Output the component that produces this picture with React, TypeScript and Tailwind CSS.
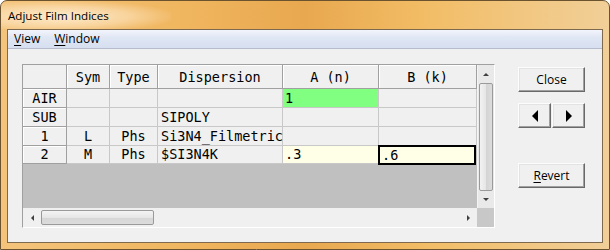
const mono = { fontFamily: '"DejaVu Sans Mono", "Liberation Mono", monospace' };

const cols = [
  { key: "sym", w: "w-[43px]", align: "justify-center" },
  { key: "type", w: "w-[48px]", align: "justify-center" },
  { key: "disp", w: "w-[125px]", align: "justify-start pl-[3px]" },
  { key: "a", w: "w-[96px]", align: "justify-start pl-[2px]" },
  { key: "b", w: "w-[98px]", align: "justify-start pl-[2px]" },
];

const headers = ["Sym", "Type", "Dispersion", "A (n)", "B (k)"];

const rows = [
  { label: "AIR", h: "h-[19px]", cells: ["", "", "", "1", ""] },
  { label: "SUB", h: "h-[19px]", cells: ["", "", "SIPOLY", "", ""] },
  { label: "1", h: "h-[19px]", cells: ["L", "Phs", "Si3N4_Filmetric", "", ""] },
  { label: "2", h: "h-[18px]", cells: ["M", "Phs", "$SI3N4K", ".3", ".6"] },
];

function cellBg(r: number, c: number) {
  if (r === 0 && c === 3) return "bg-[#80ff80]";
  if (r === 3 && (c === 3 || c === 4)) return "bg-[#ffffe8]";
  return "bg-[#f0f0f0]";
}

function Button({ children, className = "" }: { children: React.ReactNode; className?: string }) {
  return (
    <div
      className={`h-[25px] flex items-center justify-center border border-t-[#fcfcfc] border-l-[#fcfcfc] border-r-[#696969] border-b-[#696969] bg-[#f0f0f0] shadow-[inset_-1px_-1px_0_#a0a0a0,inset_1px_1px_0_#e3e3e3] text-[12px] text-black ${className}`}
    >
      {children}
    </div>
  );
}

function Tri({ dir, size = 4, color = "#404040" }: { dir: "up" | "down" | "left" | "right"; size?: number; color?: string }) {
  const s = size;
  const pts =
    dir === "up"
      ? `0,${s} ${s},0 ${2 * s},${s}`
      : dir === "down"
      ? `0,0 ${2 * s},0 ${s},${s}`
      : dir === "left"
      ? `${s},0 ${s},${2 * s} 0,${s}`
      : `0,0 0,${2 * s} ${s},${s}`;
  const w = dir === "up" || dir === "down" ? 2 * s : s;
  const h = dir === "up" || dir === "down" ? s : 2 * s;
  return (
    <svg width={w} height={h} viewBox={`0 0 ${w} ${h}`}>
      <polygon points={pts} fill={color} />
    </svg>
  );
}

export default function App() {
  return (
    <div
      className="w-[610px] h-[250px] flex flex-col border border-[#6b5330] rounded-t-[7px] bg-[linear-gradient(90deg,#f4c47c_0%,#f0b65f_30%,#e8a84f_50%,#f2bd66_70%,#f1cf98_100%)] px-[6px] pb-[6px]"
      style={{ fontFamily: '"Open Sans", "Noto Sans", sans-serif' }}
    >
      <div className="h-[28px] flex items-center pl-[1px] text-[11.6px] text-black relative">
        <div className="absolute left-[-6px] top-0 w-[170px] h-[28px] bg-[radial-gradient(ellipse_at_35%_55%,rgba(255,240,215,0.9)_0%,rgba(255,235,205,0.5)_45%,rgba(255,230,200,0)_75%)]" />
        <span className="relative pt-[1px]">Adjust Film Indices</span>
      </div>
      <div className="flex-1 flex flex-col border border-[#7d6a4e] bg-[#f0f0f0]">
        <div className="h-[19px] flex items-center border-b border-[#b6bccc] bg-[linear-gradient(180deg,#f3f5fb_0%,#e0e7f4_40%,#d6dff0_100%)] text-[12px] text-black">
          <span className="ml-[6px]"><span className="underline underline-offset-2">V</span>iew</span>
          <span className="ml-[14px]"><span className="underline underline-offset-2">W</span>indow</span>
        </div>
        <div className="flex pl-[14px] pt-[15px]">
          <div className="w-[473px] h-[164px] flex flex-col border border-t-[#a0a0a0] border-l-[#a0a0a0] border-r-white border-b-white" style={mono}>
            <div className="flex h-[143px]">
              <div className="w-[454px] flex flex-col bg-[#c0c0c0] text-[13.5px] text-black">
                <div className="flex h-[24px]">
                  <div className="w-[44px] h-full bg-[#f0f0f0] border-r border-b border-[#a0a0a0]" />
                  {headers.map((h, i) => (
                    <div
                      key={h}
                      className={`${cols[i].w} h-full flex items-center justify-center pt-[1px] bg-[#f0f0f0] border-r border-b border-[#a0a0a0] shadow-[inset_1px_1px_0_#ffffff]`}
                    >
                      {h}
                    </div>
                  ))}
                </div>
                {rows.map((row, r) => (
                  <div key={row.label} className={`flex ${row.h}`}>
                    <div className="w-[44px] h-full flex items-center justify-center bg-[#f0f0f0] border-r border-b border-[#a0a0a0] shadow-[inset_1px_1px_0_#ffffff]">
                      {row.label}
                    </div>
                    {row.cells.map((c, i) =>
                      r === 3 && i === 4 ? (
                        <div key={i} className={`${cols[i].w} h-[20px] -mt-[1px] -ml-[1px] mr-[1px] flex items-center pl-[2px] bg-[#ffffe8] border-2 border-black`}>
                          {c}
                        </div>
                      ) : (
                        <div
                          key={i}
                          className={`${cols[i].w} h-full flex items-center ${cols[i].align} ${cellBg(r, i)} border-r border-b border-[#c8c8c8]`}
                        >
                          {c}
                        </div>
                      )
                    )}
                  </div>
                ))}
              </div>
              <div className="w-[17px] flex flex-col bg-[#e9e9e9] border-l border-[#f4f4f4]">
                <div className="h-[18px] flex items-center justify-center">
                  <Tri dir="up" size={3} />
                </div>
                <div className="mx-[1px] h-[108px] rounded-[2px] border border-[#9a9a9a] bg-[linear-gradient(90deg,#f2f2f2_0%,#e6e6e6_50%,#d4d4d4_51%,#dcdcdc_100%)]" />
                <div className="flex-1 flex items-center justify-center">
                  <Tri dir="down" size={3} />
                </div>
              </div>
            </div>
            <div className="flex flex-1">
              <div className="w-[454px] flex items-center bg-[#f0f0f0]">
                <div className="w-[18px] flex justify-center">
                  <Tri dir="left" size={3} />
                </div>
                <div className="w-[113px] h-[15px] rounded-[2px] border border-[#9a9a9a] bg-[linear-gradient(180deg,#f4f4f4_0%,#e6e6e6_50%,#d6d6d6_51%,#dcdcdc_100%)]" />
                <div className="flex-1" />
                <div className="w-[18px] flex justify-center">
                  <Tri dir="right" size={3} />
                </div>
              </div>
              <div className="w-[17px] bg-[#c8c8c8]" />
            </div>
          </div>
          <div className="ml-[23px] pt-[3px] w-[67px] flex flex-col">
            <Button>Close</Button>
            <div className="mt-[11px] flex gap-[1px]">
              <Button className="w-[33px]">
                <Tri dir="left" size={6} color="#000" />
              </Button>
              <Button className="w-[33px]">
                <Tri dir="right" size={6} color="#000" />
              </Button>
            </div>
            <Button className="mt-[35px]">
              <span><span className="underline underline-offset-2">R</span>evert</span>
            </Button>
          </div>
        </div>
      </div>
    </div>
  );
}
